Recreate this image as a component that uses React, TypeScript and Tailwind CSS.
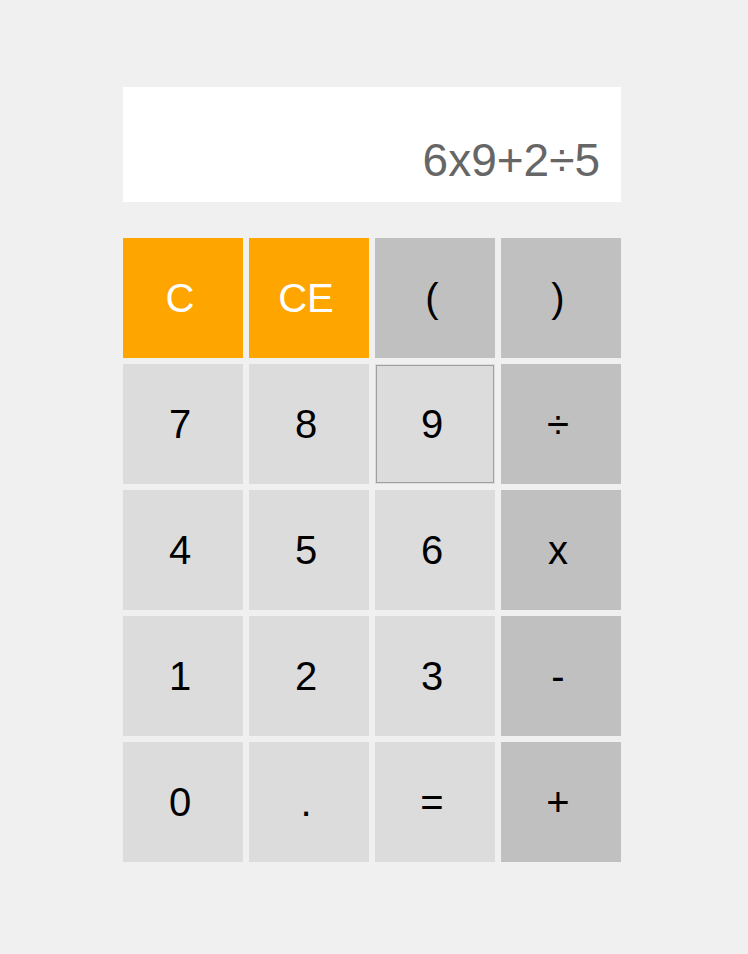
import React from "react";

type Key = { label: string; kind: "orange" | "op" | "num"; focus?: boolean };

const keys: Key[] = [
  { label: "C", kind: "orange" },
  { label: "CE", kind: "orange" },
  { label: "(", kind: "op" },
  { label: ")", kind: "op" },
  { label: "7", kind: "num" },
  { label: "8", kind: "num" },
  { label: "9", kind: "num", focus: true },
  { label: "÷", kind: "op" },
  { label: "4", kind: "num" },
  { label: "5", kind: "num" },
  { label: "6", kind: "num" },
  { label: "x", kind: "op" },
  { label: "1", kind: "num" },
  { label: "2", kind: "num" },
  { label: "3", kind: "num" },
  { label: "-", kind: "op" },
  { label: "0", kind: "num" },
  { label: ".", kind: "num" },
  { label: "=", kind: "num" },
  { label: "+", kind: "op" },
];

export default function App() {
  return (
    <div
      className="min-h-[954px] w-full bg-[#f0f0f0] pt-[87px]"
      style={{ fontFamily: '"Liberation Sans", Arial, sans-serif' }}
    >
      <div className="ml-[123px] w-[498px]">
        <div className="flex h-[115px] items-end justify-end bg-white pb-[19px] pr-[21px] text-[46px] leading-none text-[#666666]">
          6x9+2÷5
        </div>
        <div className="mt-[36px] grid grid-cols-[repeat(4,120px)] grid-rows-[repeat(5,120px)] gap-[6px]">
          {keys.map((k, i) => (
            <button
              key={i}
              className={
                "flex items-center justify-center pr-[6px] text-[40px] leading-none " +
                (k.kind === "orange"
                  ? "bg-[#ffa500] text-white"
                  : k.kind === "op"
                  ? "bg-[#c0c0c0] text-black"
                  : "bg-[#dcdcdc] text-black") +
                (k.focus ? " outline-1 outline-[#a0a0a0] -outline-offset-2" : "")
              }
            >
              {k.label}
            </button>
          ))}
        </div>
      </div>
    </div>
  );
}
